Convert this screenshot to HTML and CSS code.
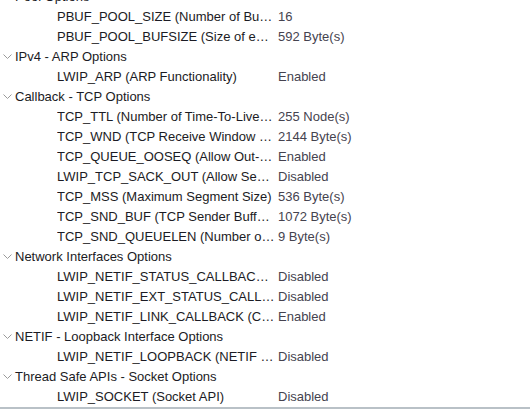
FILE: index.html
```html
<!DOCTYPE html>
<html lang="en">
<head>
  <meta charset="UTF-8" />
  <title>LwIP Options</title>
  <link rel="stylesheet" href="styles.css">
</head>
<body>
  <div class="panel">
    <div class="tree" id="tree">
      <!-- rows built below -->
    </div>
    <div class="hbar"></div>
  </div>

  <script>
    const groups = [
      { name: "Pool Options", items: [
        ["PBUF_POOL_SIZE (Number of Buffers in the pool)", "16"],
        ["PBUF_POOL_BUFSIZE (Size of each pbuf in the pool)", "592 Byte(s)"]
      ]},
      { name: "IPv4 - ARP Options", items: [
        ["LWIP_ARP (ARP Functionality)", "Enabled"]
      ]},
      { name: "Callback - TCP Options", items: [
        ["TCP_TTL (Number of Time-To-Live used by TCP packets)", "255 Node(s)"],
        ["TCP_WND (TCP Receive Window Size in bytes)", "2144 Byte(s)"],
        ["TCP_QUEUE_OOSEQ (Allow Out-Of-Order segments)", "Enabled"],
        ["LWIP_TCP_SACK_OUT (Allow Sending SACKs)", "Disabled"],
        ["TCP_MSS (Maximum Segment Size)", "536 Byte(s)"],
        ["TCP_SND_BUF (TCP Sender Buffer Space)", "1072 Byte(s)"],
        ["TCP_SND_QUEUELEN (Number of pbufs allowed)", "9 Byte(s)"]
      ]},
      { name: "Network Interfaces Options", items: [
        ["LWIP_NETIF_STATUS_CALLBACK (Status callback)", "Disabled"],
        ["LWIP_NETIF_EXT_STATUS_CALLBACK (Extended status)", "Disabled"],
        ["LWIP_NETIF_LINK_CALLBACK (Callback Function)", "Enabled"]
      ]},
      { name: "NETIF - Loopback Interface Options", items: [
        ["LWIP_NETIF_LOOPBACK (NETIF Loopback)", "Disabled"]
      ]},
      { name: "Thread Safe APIs - Socket Options", items: [
        ["LWIP_SOCKET (Socket API)", "Disabled"]
      ]}
    ];

    const tree = document.getElementById('tree');
    const chevron = '<svg class="chev" width="9" height="6" viewBox="0 0 9 6"><polyline points="0.5,0.5 4.5,4.5 8.5,0.5" fill="none" stroke="#9a9a9a" stroke-width="1"/></svg>';

    groups.forEach(group => {
      const head = document.createElement('div');
      head.className = 'row group';
      head.innerHTML = `${chevron}<span class="group-name">${group.name}</span>`;
      tree.appendChild(head);

      group.items.forEach(([name, value]) => {
        const row = document.createElement('div');
        row.className = 'row item';
        row.innerHTML = `<span class="name">${name}</span><span class="value">${value}</span>`;
        tree.appendChild(row);
      });
    });
  </script>
</body>
</html>
```

FILE: styles.css
```css
html, body {
  margin: 0;
  padding: 0;
  background-color: #fff;
}

body {
  font-family: "Liberation Sans", Arial, sans-serif;
  font-size: 13px;
  color: #1b1b24;
  overflow: hidden;
}

.panel {
  height: 409px;
  display: flex;
  flex-direction: column;
}

.tree {
  flex: 1;
  overflow: hidden;
}

.tree .row:first-child {
  margin-top: -14px;
}

.row {
  height: 20px;
  display: flex;
  align-items: center;
  white-space: nowrap;
}

.group {
  padding-left: 3px;
}

.chev {
  margin-right: 3px;
  margin-top: 2px;
}

.item {
  padding-left: 57px;
}

.name {
  width: 218px;
  overflow: hidden;
  text-overflow: ellipsis;
}

.value {
  margin-left: 3px;
  color: #45434f;
}

.hbar {
  height: 2px;
  background-color: #b9c1c7;
}
```
